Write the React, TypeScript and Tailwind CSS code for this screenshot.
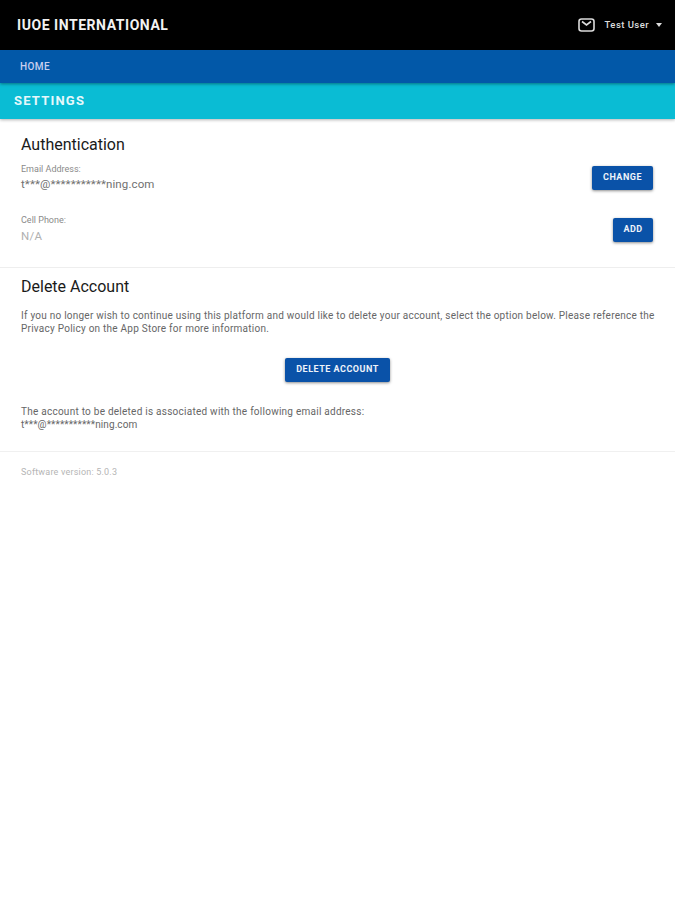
const FONT = "font-['Roboto',sans-serif]";

function Button({ label, className }: { label: string; className: string }) {
  return (
    <button className={`h-6 rounded-[2px] bg-[#0a52a8] text-[9px] font-bold tracking-[0.5px] text-[#eef3fa] shadow-[0_1px_3px_rgba(0,0,0,0.45)] ${className}`}>
      {label}
    </button>
  );
}

function MailIcon() {
  return (
    <svg width="17" height="14" viewBox="0 0 17 14" fill="none" stroke="#dcdcdc" strokeWidth="1.6">
      <rect x="1" y="1" width="15" height="12" rx="2.5" />
      <path d="M4 3.5 L8.5 7 L13 3.5" />
    </svg>
  );
}

export default function App() {
  return (
    <div className={`${FONT} min-h-[900px] w-[675px] bg-white`}>
      {/* Top bar */}
      <header className="flex h-[50px] items-center justify-between bg-black pl-[17px] pr-[13px]">
        <span className="text-[14px] font-bold tracking-[0.55px] text-[#f2f2f2]">IUOE INTERNATIONAL</span>
        <div className="flex items-center">
          <MailIcon />
          <span className="ml-[10px] text-[9.5px] font-medium tracking-[0.45px] text-[#dddddd]">Test User</span>
          <span className="ml-[7px] h-0 w-0 border-x-[3px] border-t-[4px] border-x-transparent border-t-[#dddddd]" />
        </div>
      </header>

      {/* Nav */}
      <nav className="relative z-20 flex h-[33px] items-center bg-[#0258a8] pl-5 shadow-[0_1px_3px_rgba(0,0,0,0.4)]">
        <span className="text-[10px] font-medium tracking-[0.4px] text-[#c9cfee]">HOME</span>
      </nav>

      {/* Page title */}
      <div className="relative z-10 flex h-[36px] items-center bg-[#0abcd4] pl-[14px] shadow-[0_1px_3px_rgba(0,0,0,0.3)]">
        <h1 className="text-[13px] font-bold tracking-[1.2px] text-[#e6f8fb]">SETTINGS</h1>
      </div>

      {/* Authentication */}
      <section className="h-[149px] border-b border-[#eeeeee] pl-[21px] pr-[22px] pt-[16px]">
        <h2 className="text-[16px] leading-[20px] text-[#1a1a1a]">Authentication</h2>
        <div className="mt-[8px] flex items-start justify-between">
          <div>
            <div className="text-[9px] leading-[12px] text-[#8a8a8a]">Email Address:</div>
            <div className="mt-[1px] text-[11.5px] leading-[16px] tracking-[0.1px] text-[#707070]">t***@***********ning.com</div>
          </div>
          <Button label="CHANGE" className="mt-[3px] w-[61px]" />
        </div>
        <div className="mt-[22px] flex items-start justify-between">
          <div>
            <div className="text-[9px] leading-[12px] text-[#8a8a8a]">Cell Phone:</div>
            <div className="mt-[2px] text-[11.5px] leading-[16px] tracking-[0.3px] text-[#b0b0b0]">N/A</div>
          </div>
          <Button label="ADD" className="mt-[4px] w-10" />
        </div>
      </section>

      {/* Delete account */}
      <section className="h-[184px] border-b border-[#f0f0f0] px-[21px] pt-[9px]">
        <h2 className="text-[16px] leading-[20px] text-[#1a1a1a]">Delete Account</h2>
        <p className="mt-[12px] w-[640px] text-[10px] leading-[13px] tracking-[0.24px] text-[#666666]">
          If you no longer wish to continue using this platform and would like to delete your account, select the option below. Please reference the Privacy Policy on the App Store for more information.
        </p>
        <div className="mt-[23px] flex justify-center">
          <Button label="DELETE ACCOUNT" className="w-[105px]" />
        </div>
        <p className="mt-[23px] text-[10px] leading-[13px] tracking-[0.25px] text-[#666666]">
          The account to be deleted is associated with the following email address:
          <br />
          <span className="tracking-[0.1px]">t***@***********ning.com</span>
        </p>
      </section>

      <div className="pl-[21px] pt-[14px] text-[9px] leading-[12px] tracking-[0.2px] text-[#b5b5b5]">Software version: 5.0.3</div>
    </div>
  );
}
